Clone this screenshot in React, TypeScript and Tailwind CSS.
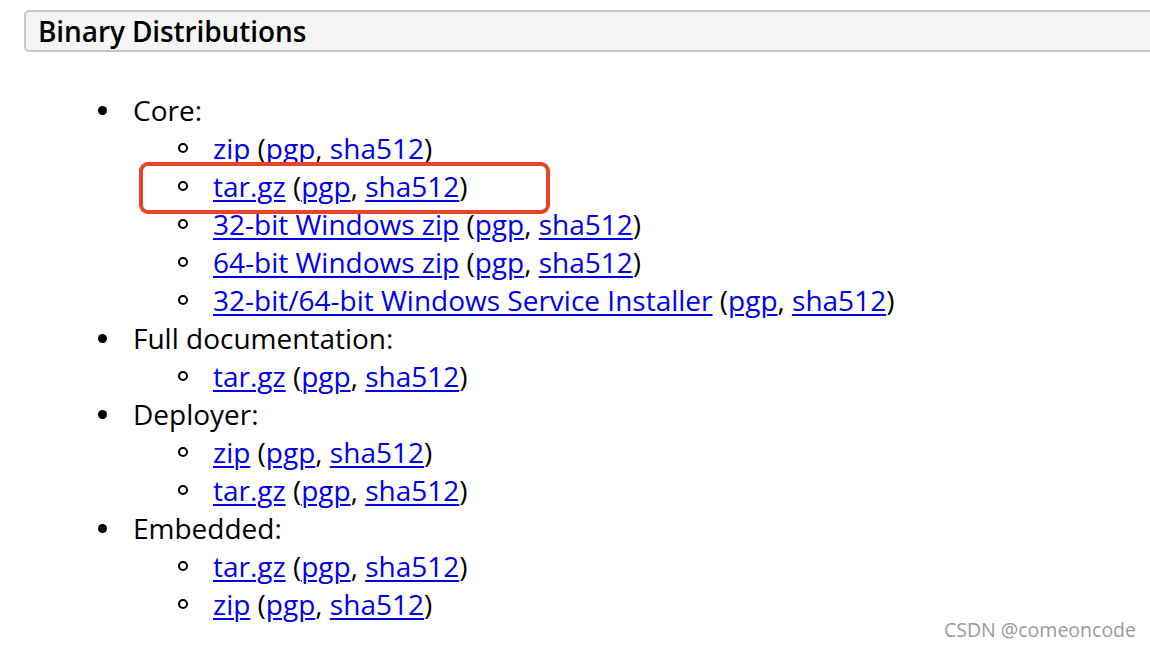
import React from 'react';

const groups: { title: string; items: string[] }[] = [
  { title: 'Core:', items: ['zip', 'tar.gz', '32-bit Windows zip', '64-bit Windows zip', '32-bit/64-bit Windows Service Installer'] },
  { title: 'Full documentation:', items: ['tar.gz'] },
  { title: 'Deployer:', items: ['zip', 'tar.gz'] },
  { title: 'Embedded:', items: ['tar.gz', 'zip'] },
];

function Link({ children }: { children: React.ReactNode }) {
  return <a href="#" className="text-[#0000ee] underline underline-offset-[3px] decoration-2">{children}</a>;
}

export default function App() {
  return (
    <div className="relative w-[1150px] h-[650px] overflow-hidden bg-white text-black" style={{ fontFamily: '"Open Sans", sans-serif' }}>
      <div className="mt-[10px] ml-[24px] -mr-4 h-[42px] flex items-center pl-[12px] bg-[#f5f5f5] border-2 border-[#c8c8c8] rounded-[5px]">
        <h2 className="text-[28px] font-semibold leading-none tracking-[-0.1px]">Binary Distributions</h2>
      </div>

      <ul className="mt-[39px] text-[28px] leading-[38px]">
        {groups.map((g) => (
          <li key={g.title}>
            <div className="flex items-center">
              <span className="w-[133px] flex justify-end pr-[26px]">
                <span className="block w-[9px] h-[9px] rounded-full bg-black" />
              </span>
              <span>{g.title}</span>
            </div>
            <ul>
              {g.items.map((it, i) => (
                <li key={i} className="flex items-center">
                  <span className="w-[213px] shrink-0 flex justify-end pr-[25px]">
                    <span className="block w-[10px] h-[10px] rounded-full border-2 border-black" />
                  </span>
                  <span className="whitespace-nowrap">
                    <Link>{it}</Link> (<Link>pgp</Link>, <Link>sha512</Link>)
                  </span>
                </li>
              ))}
            </ul>
          </li>
        ))}
      </ul>

      <div className="absolute left-[139px] top-[162px] w-[411px] h-[52px] border-[4px] border-[#e8442c] rounded-[9px]" />

      <div className="absolute right-[14px] bottom-[6px] text-[19.5px] text-[#9a9a9a]">CSDN @comeoncode</div>
    </div>
  );
}
